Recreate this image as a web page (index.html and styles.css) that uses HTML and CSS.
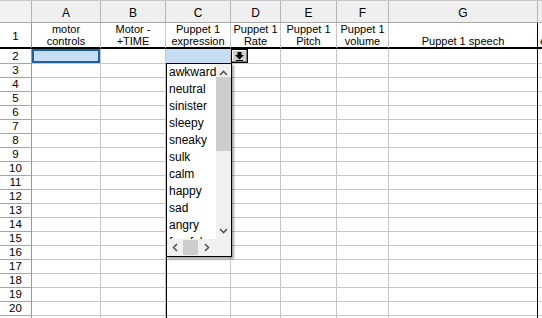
FILE: index.html
```html
<!DOCTYPE html>
<html>
<head>
<meta charset="utf-8">
<link rel="stylesheet" href="styles.css">
</head>
<body>
<div class="sheet">
  <div class="row head">
    <div class="corner"></div><div>A</div><div>B</div><div>C</div><div>D</div><div>E</div><div>F</div><div>G</div><div></div>
  </div>
  <div class="row r1">
    <div class="rh">1</div>
    <div class="lbl"><span>motor</span><span>controls</span></div>
    <div class="lbl"><span>Motor -</span><span>+TIME</span></div>
    <div class="lbl"><span>Puppet 1</span><span>expression</span></div>
    <div class="lbl"><span>Puppet 1</span><span>Rate</span></div>
    <div class="lbl"><span>Puppet 1</span><span>Pitch</span></div>
    <div class="lbl"><span>Puppet 1</span><span>volume</span></div>
    <div class="lbl"><span>Puppet 1 speech</span></div>
    <div class="lbl hcut"><span>e</span></div>
  </div>
  <div class="row"><div class="rh">2</div><div class="sel"></div><div></div><div class="hi"></div><div></div><div></div><div></div><div></div><div></div></div>
  <div class="row"><div class="rh">3</div><div></div><div></div><div></div><div></div><div></div><div></div><div></div><div></div></div>
  <div class="row"><div class="rh">4</div><div></div><div></div><div></div><div></div><div></div><div></div><div></div><div></div></div>
  <div class="row"><div class="rh">5</div><div></div><div></div><div></div><div></div><div></div><div></div><div></div><div></div></div>
  <div class="row"><div class="rh">6</div><div></div><div></div><div></div><div></div><div></div><div></div><div></div><div></div></div>
  <div class="row"><div class="rh">7</div><div></div><div></div><div></div><div></div><div></div><div></div><div></div><div></div></div>
  <div class="row"><div class="rh">8</div><div></div><div></div><div></div><div></div><div></div><div></div><div></div><div></div></div>
  <div class="row"><div class="rh">9</div><div></div><div></div><div></div><div></div><div></div><div></div><div></div><div></div></div>
  <div class="row"><div class="rh">10</div><div></div><div></div><div></div><div></div><div></div><div></div><div></div><div></div></div>
  <div class="row"><div class="rh">11</div><div></div><div></div><div></div><div></div><div></div><div></div><div></div><div></div></div>
  <div class="row"><div class="rh">12</div><div></div><div></div><div></div><div></div><div></div><div></div><div></div><div></div></div>
  <div class="row"><div class="rh">13</div><div></div><div></div><div></div><div></div><div></div><div></div><div></div><div></div></div>
  <div class="row"><div class="rh">14</div><div></div><div></div><div></div><div></div><div></div><div></div><div></div><div></div></div>
  <div class="row"><div class="rh">15</div><div></div><div></div><div></div><div></div><div></div><div></div><div></div><div></div></div>
  <div class="row"><div class="rh">16</div><div></div><div></div><div></div><div></div><div></div><div></div><div></div><div></div></div>
  <div class="row"><div class="rh">17</div><div></div><div></div><div></div><div></div><div></div><div></div><div></div><div></div></div>
  <div class="row"><div class="rh">18</div><div></div><div></div><div></div><div></div><div></div><div></div><div></div><div></div></div>
  <div class="row"><div class="rh">19</div><div></div><div></div><div></div><div></div><div></div><div></div><div></div><div></div></div>
  <div class="row"><div class="rh">20</div><div></div><div></div><div></div><div></div><div></div><div></div><div></div><div></div></div>
  <div class="row"><div class="rh"></div><div></div><div></div><div></div><div></div><div></div><div></div><div></div><div></div></div>

  <div class="vline"></div>

  <div class="ddbtn">
    <svg width="17" height="14" viewBox="0 0 17 14">
      <rect x="0" y="0" width="17" height="14" fill="#000"/>
      <rect x="1" y="1" width="15" height="12" fill="#808080"/>
      <rect x="1" y="1" width="14" height="11" fill="#fff"/>
      <rect x="2" y="2" width="13" height="10" fill="#d4d0c8"/>
      <path d="M6.5 3h4v3h2.5L8.5 10.5 4 6h2.5z" fill="#000"/>
      <rect x="5" y="11" width="7" height="1" fill="#000"/>
    </svg>
  </div>

  <div class="dd">
    <div class="items">
      <div class="item">awkward</div>
      <div class="item">neutral</div>
      <div class="item">sinister</div>
      <div class="item">sleepy</div>
      <div class="item">sneaky</div>
      <div class="item">sulk</div>
      <div class="item">calm</div>
      <div class="item">happy</div>
      <div class="item">sad</div>
      <div class="item">angry</div>
      <div class="item">fearful</div>
    </div>
    <div class="vbar">
      <div class="vup"><svg width="9" height="6" viewBox="0 0 9 6"><path d="M1 5 4.5 1.5 8 5" fill="none" stroke="#555" stroke-width="1.6"/></svg></div>
      <div class="vthumb"></div>
      <div class="vspace"></div>
      <div class="vdown"><svg width="9" height="6" viewBox="0 0 9 6"><path d="M1 1 4.5 4.5 8 1" fill="none" stroke="#555" stroke-width="1.6"/></svg></div>
    </div>
    <div class="hbar">
      <div class="hleft"><svg width="6" height="9" viewBox="0 0 6 9"><path d="M5 1 1.5 4.5 5 8" fill="none" stroke="#555" stroke-width="1.6"/></svg></div>
      <div class="hthumb"></div>
      <div class="hright"><svg width="6" height="9" viewBox="0 0 6 9"><path d="M1 1 4.5 4.5 1 8" fill="none" stroke="#555" stroke-width="1.6"/></svg></div>
    </div>
    <div class="bcorner"></div>
  </div>
</div>
</body>
</html>
```

FILE: styles.css
```css
html, body {
  margin: 0;
  padding: 0;
  width: 542px;
  height: 318px;
  overflow: hidden;
  background: #fff;
  font-family: "Liberation Sans", Arial, sans-serif;
  color: #000;
}

.sheet {
  position: relative;
  width: 542px;
  height: 318px;
  overflow: hidden;
  border-top: 1px solid #c8c8c8;
  box-sizing: border-box;
}

.row {
  display: grid;
  grid-template-columns: 32px 69px 65px 65px 50px 56px 52px 149px 10px;
  height: 14px;
}

.row > div {
  box-sizing: border-box;
  border-right: 1px solid #c6c6c6;
  border-bottom: 1px solid #c6c6c6;
  min-width: 0;
}

.row > div:nth-child(8) {
  border-right-color: #000;
}

.head {
  height: 22px;
  background: #efefef;
}

.head > div {
  display: flex;
  justify-content: center;
  align-items: center;
  padding-top: 2px;
  font-size: 12px;
  line-height: 14px;
  border-right-color: #b4b4b4;
  border-bottom-color: #a8a8a8;
}

.head > div:nth-child(8) {
  border-right-color: #b4b4b4;
}

.head .corner {
  background: #f2f2f2;
}

.rh {
  display: flex;
  justify-content: center;
  align-items: center;
  font-size: 11.5px;
  line-height: 13px;
  padding-top: 1px;
}

.row > .rh {
  border-right-color: #9a9a9a;
  border-bottom-color: #a6a6a6;
}

.r1 {
  height: 26px;
}

.r1 > div {
  border-bottom: 2px solid #000;
}

.row.r1 > .rh {
  border-bottom-color: #000;
  padding-top: 2px;
}

.lbl {
  display: flex;
  flex-direction: column;
  justify-content: flex-end;
  align-items: center;
  font-size: 11px;
  line-height: 12px;
  white-space: nowrap;
  overflow: hidden;
}

.lbl.hcut {
  align-items: flex-start;
  padding-left: 2px;
}

.sel {
  background: #c6ddf3;
  box-shadow: inset 0 0 0 2px #23609e;
}

.hi {
  background: #c6ddf3;
}

.vline {
  position: absolute;
  left: 166px;
  top: 62px;
  bottom: 0;
  width: 1px;
  background: #000;
}

.ddbtn {
  position: absolute;
  left: 231px;
  top: 48px;
  width: 17px;
  height: 14px;
  line-height: 0;
}

.dd {
  position: absolute;
  left: 166px;
  top: 62px;
  width: 66px;
  height: 194px;
  box-sizing: border-box;
  border: 1px solid #000;
  background: #fff;
  box-shadow: 2px 2px 2px rgba(0, 0, 0, 0.35);
  display: grid;
  grid-template-columns: 49px 15px;
  grid-template-rows: 175px 17px;
}

.items {
  overflow: hidden;
  font-size: 12px;
  line-height: 17px;
}

.item {
  height: 17px;
  padding-left: 2px;
  white-space: nowrap;
}

.vbar {
  background: #f0f0f0;
  display: flex;
  flex-direction: column;
}

.vup {
  height: 13px;
  display: flex;
  justify-content: center;
  align-items: flex-end;
  padding-bottom: 1px;
  box-sizing: border-box;
}

.vthumb {
  height: 74px;
  background: #cdcdcd;
}

.vspace {
  flex: 1;
}

.vdown {
  height: 16px;
  display: flex;
  justify-content: center;
  align-items: center;
}

.hbar {
  background: #f0f0f0;
  display: flex;
  padding: 1px 0;
}

.hleft {
  width: 16px;
  display: flex;
  justify-content: center;
  align-items: center;
}

.hthumb {
  width: 15px;
  background: #cdcdcd;
}

.hright {
  flex: 1;
  display: flex;
  justify-content: center;
  align-items: center;
}

.bcorner {
  background: #f0f0f0;
}
```
